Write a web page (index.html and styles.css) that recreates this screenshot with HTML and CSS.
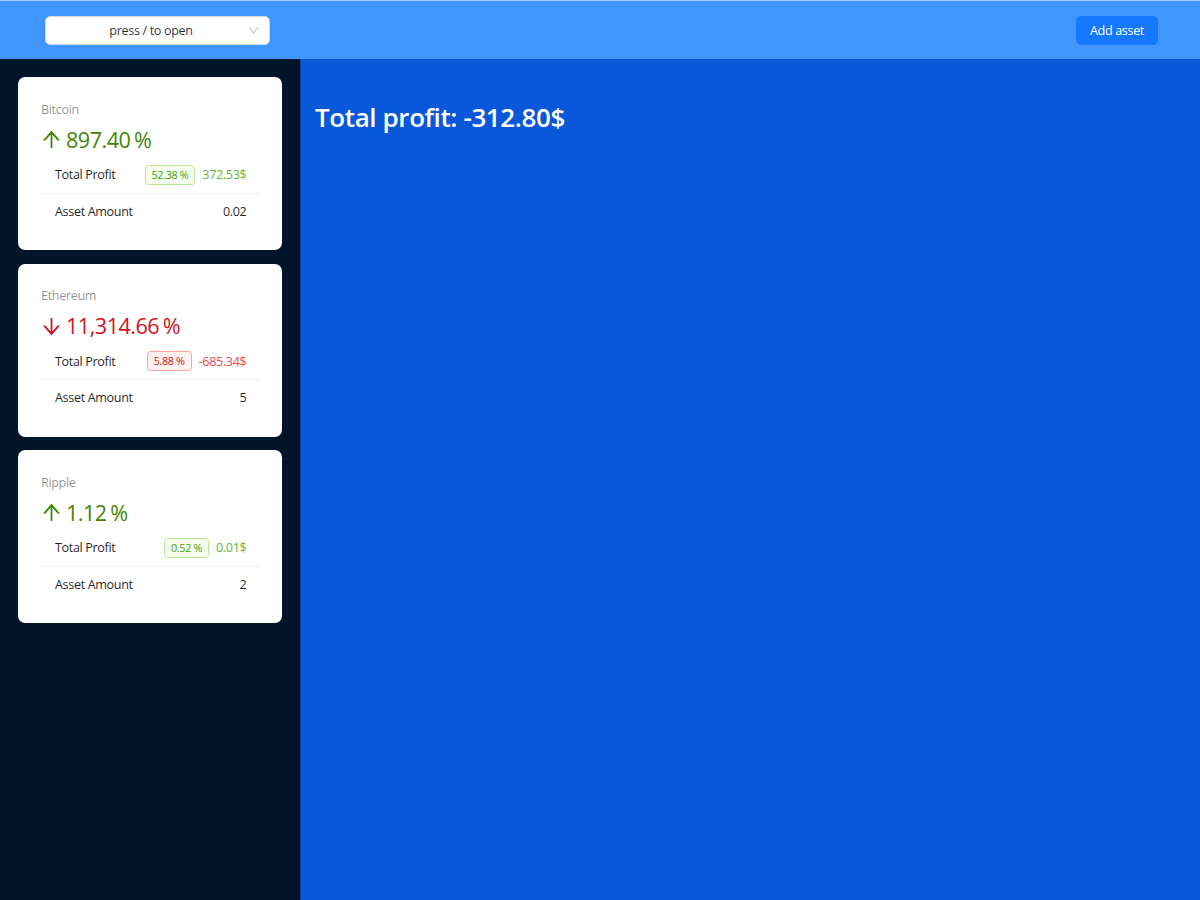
FILE: index.html
```html
<!DOCTYPE html>
<html lang="en">
<head>
<meta charset="utf-8">
<title>Crypto portfolio</title>
<link rel="stylesheet" href="styles.css">
</head>
<body>
<div class="layout">
  <header class="header">
    <div class="select">
      <span class="select-text">press / to open</span>
      <svg class="select-arrow" viewBox="64 64 896 896" width="11" height="11" fill="currentColor"><path d="M884 256h-75c-5.1 0-9.9 2.5-12.9 6.7L512 654.2 227.9 262.7c-3-4.2-7.8-6.7-12.9-6.7h-75c-6.5 0-10.3 7.4-6.5 12.7l352.6 486.1c12.8 17.6 39 17.6 51.7 0l352.6-486.1c3.900-5.300.1-12.7-6.400-12.7z"/></svg>
    </div>
    <button class="btn-primary">Add asset</button>
  </header>
  <div class="main">
    <aside class="sider">
      <div class="card">
        <div class="stat-title">Bitcoin</div>
        <div class="stat-value up">
          <svg class="stat-icon" viewBox="64 64 896 896" fill="currentColor"><path d="M868 545.5L536.1 163a31.96 31.96 0 00-48.3 0L156 545.5a7.97 7.97 0 006 13.2h81c4.6 0 9-2 12.1-5.5L474 300.9V864c0 4.4 3.6 8 8 8h60c4.4 0 8-3.6 8-8V300.9l218.9 252.3c3 3.5 7.4 5.5 12.1 5.5h81c6.8 0 10.5-8 6-13.2z"/></svg>
          <span>897.40</span><span class="suffix">%</span>
        </div>
        <ul class="list">
          <li class="list-item"><span>Total Profit</span><span class="right"><span class="tag tag-green">52.38 %</span><span class="text-success">372.53$</span></span></li>
          <li class="list-item"><span>Asset Amount</span><span>0.02</span></li>
        </ul>
      </div>
      <div class="card">
        <div class="stat-title">Ethereum</div>
        <div class="stat-value down">
          <svg class="stat-icon" viewBox="64 64 896 896" fill="currentColor"><path d="M862 465.3h-81c-4.6 0-9 2-12.1 5.5L550 723.1V160c0-4.4-3.6-8-8-8h-60c-4.4 0-8 3.6-8 8v563.1L255.1 470.8c-3-3.5-7.4-5.5-12.1-5.5h-81c-6.8 0-10.5 8.1-6 13.2L487.9 861a31.96 31.96 0 0048.3 0L868 478.5c4.4-5.2.8-13.2-6-13.2z"/></svg>
          <span>11,314.66</span><span class="suffix">%</span>
        </div>
        <ul class="list">
          <li class="list-item"><span>Total Profit</span><span class="right"><span class="tag tag-red">5.88 %</span><span class="text-danger">-685.34$</span></span></li>
          <li class="list-item"><span>Asset Amount</span><span>5</span></li>
        </ul>
      </div>
      <div class="card">
        <div class="stat-title">Ripple</div>
        <div class="stat-value up">
          <svg class="stat-icon" viewBox="64 64 896 896" fill="currentColor"><path d="M868 545.5L536.1 163a31.96 31.96 0 00-48.3 0L156 545.5a7.97 7.97 0 006 13.2h81c4.6 0 9-2 12.1-5.5L474 300.9V864c0 4.4 3.6 8 8 8h60c4.4 0 8-3.6 8-8V300.9l218.9 252.3c3 3.5 7.4 5.5 12.1 5.5h81c6.8 0 10.5-8 6-13.2z"/></svg>
          <span>1.12</span><span class="suffix">%</span>
        </div>
        <ul class="list">
          <li class="list-item"><span>Total Profit</span><span class="right"><span class="tag tag-green">0.52 %</span><span class="text-success">0.01$</span></span></li>
          <li class="list-item"><span>Asset Amount</span><span>2</span></li>
        </ul>
      </div>
    </aside>
    <main class="content">
      <h2 class="total">Total profit: -312.80$</h2>
    </main>
  </div>
</div>
</body>
</html>
```

FILE: styles.css
```css
* { box-sizing: border-box; }
html, body { margin: 0; padding: 0; height: 100%; }
body {
  font-family: "Open Sans", "Noto Sans", sans-serif;
  font-size: 12.6px;
  letter-spacing: -0.35px;
  color: rgba(0, 0, 0, 0.88);
}
.layout { display: flex; flex-direction: column; height: 900px; }
.header {
  height: 59px;
  flex: 0 0 59px;
  background: #4096ff;
  border-top: 1px solid #a9c9f5;
  display: flex;
  align-items: center;
  justify-content: space-between;
  padding: 0 42px 0 45px;
}
.select {
  width: 225px;
  height: 28.8px;
  margin-top: 1px;
  background: #fff;
  border: 1px solid #d9d9d9;
  border-radius: 5.4px;
  display: flex;
  align-items: center;
  padding: 0 24px 0 11px;
  position: relative;
}
.select-text { flex: 1; text-align: center; color: rgba(0, 0, 0, 0.82); }
.select-arrow {
  position: absolute;
  right: 10px;
  top: 8px;
  color: rgba(0, 0, 0, 0.25);
}
.btn-primary {
  height: 28.8px;
  margin-top: 1px;
  padding: 0 14px;
  border: none;
  border-radius: 5.4px;
  background: #1677ff;
  color: #fff;
  font-family: inherit;
  font-size: 12.6px;
  letter-spacing: -0.35px;
}
.main { flex: 1; display: flex; }
.sider {
  width: 300px;
  flex: 0 0 300px;
  background: #001529;
  padding: 18px;
  display: flex;
  flex-direction: column;
  gap: 13.5px;
}
.card {
  background: #fff;
  border-radius: 7.2px;
  padding: 22.6px 21.6px 20.6px 23px;
  height: 173px;
}
.stat-title {
  color: rgba(0, 0, 0, 0.45);
  font-size: 12.6px;
  line-height: 19.8px;
  margin-bottom: 3.6px;
}
.stat-value {
  font-size: 21.6px;
  line-height: 34px;
  display: flex;
  align-items: center;
  letter-spacing: -0.5px;
}
.stat-value.up { color: #3f8600; }
.stat-value.down { color: #cf1322; }
.stat-icon { width: 21px; height: 21px; margin-right: 4px; }
.suffix { margin-left: 3.6px; }
.list { list-style: none; margin: 0; padding: 0; }
.list-item {
  height: 36px;
  display: flex;
  align-items: center;
  justify-content: space-between;
  padding: 0 14px;
}
.list-item + .list-item { border-top: 1px solid #f0f0f0; }
.right { display: flex; align-items: center; }
.tag {
  font-size: 10.8px;
  line-height: 18px;
  padding: 0 6px;
  border-radius: 3.6px;
  border: 1px solid;
  margin-right: 7px;
}
.tag-green { background: #f6ffed; border-color: #b7eb8f; color: #389e0d; }
.tag-red { background: #fff1f0; border-color: #ffa39e; color: #cf1322; }
.text-success { color: #5cb83a; }
.text-danger { color: #f0494b; }
.content {
  flex: 1;
  background: #0958d9;
  border-left: 1px solid #0a3f9e;
  padding: 0 14px;
}
.total {
  margin: 42px 0 0;
  color: #fff;
  font-size: 26px;
  line-height: 32px;
  font-weight: 600;
  letter-spacing: -0.4px;
}
```
